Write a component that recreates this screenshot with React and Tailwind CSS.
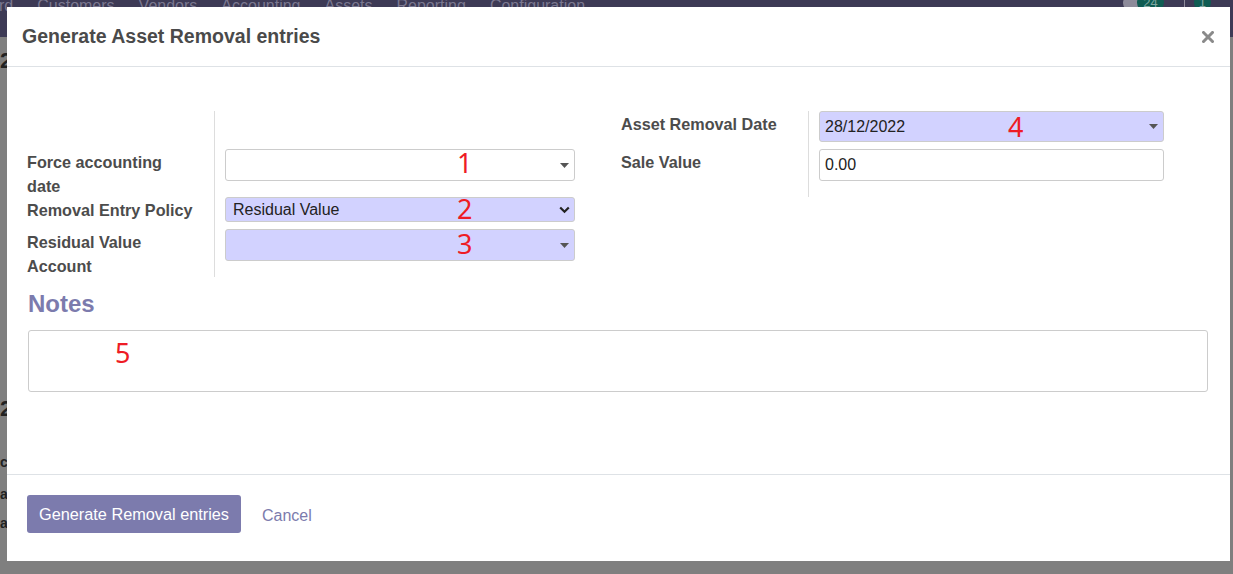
import React from "react";

const Caret = () => (
  <svg width="9" height="5" viewBox="0 0 9 5" className="shrink-0">
    <path d="M0 0 L9 0 L4.5 5 Z" fill="#555" />
  </svg>
);

const Chevron = () => (
  <svg width="11" height="8" viewBox="0 0 11 8" className="shrink-0">
    <path d="M1.2 1.5 L5.5 5.8 L9.8 1.5" fill="none" stroke="#222" strokeWidth="2.2" />
  </svg>
);

const Mark = ({ n, className }) => (
  <span
    className={"absolute text-[#ee1c25] text-[27px] leading-none pointer-events-none " + className}
    style={{ fontFamily: "'Noto Sans', sans-serif" }}
  >
    {n}
  </span>
);

export default function App() {
  return (
    <div
      className="relative w-[1233px] h-[574px] overflow-hidden bg-[#7f7f7f]"
      style={{ fontFamily: "'Liberation Sans', Arial, sans-serif" }}
    >
      {/* backdrop */}
      <div className="h-[37px] bg-[#3d3a55] flex items-start justify-between text-[16px] text-[#7b7890]">
        <div className="flex gap-[24px] -mt-[6px] -ml-[1px]">
          <span>rd</span>
          <span>Customers</span>
          <span>Vendors</span>
          <span>Accounting</span>
          <span>Assets</span>
          <span>Reporting</span>
          <span>Configuration</span>
        </div>
        <div className="flex items-start gap-[20px] mr-[22px] -mt-[6px]">
          <div className="flex items-center">
            <span className="w-[16px] h-[16px] rounded-full bg-[#8d8b9a]"></span>
            <span className="h-[17px] px-[6px] rounded-full bg-[#0f5c52] text-[13px] leading-[17px] text-[#7fa6a0] -ml-[2px]">24</span>
          </div>
          <div className="flex items-center">
            <span className="w-[14px] h-[14px] border border-[#8d8b9a] rounded-[2px]"></span>
            <span className="h-[17px] px-[5px] rounded-full bg-[#0f5c52] text-[13px] leading-[17px] text-[#7fa6a0] -ml-[4px]">1</span>
          </div>
        </div>
      </div>
      <div className="absolute left-0 top-[50px] text-[#222] font-bold text-[22px] leading-none">2</div>
      <div className="absolute left-0 top-[398px] text-[#222] font-bold text-[22px] leading-none">2</div>
      <div className="absolute left-0 top-[455px] text-[#222] font-bold text-[14px] leading-none">c</div>
      <div className="absolute left-0 top-[487px] text-[#222] font-bold text-[14px] leading-none">a</div>
      <div className="absolute left-0 top-[516px] text-[#222] font-bold text-[14px] leading-none">al</div>

      {/* modal */}
      <div className="absolute left-[7px] top-[7px] w-[1223px] h-[554px] bg-white flex flex-col">
        {/* header */}
        <div className="h-[60px] shrink-0 flex items-center justify-between pl-[15px] pr-[16px] pt-[1px] border-b border-[#dee2e6]">
          <h4 className="text-[19.5px] font-bold text-[#4a4a4a]">
            Generate Asset Removal entries
          </h4>
          <svg width="12" height="12" viewBox="0 0 12 12">
            <path d="M1.5 1.5 L10.5 10.5 M10.5 1.5 L1.5 10.5" stroke="#8a8a8a" strokeWidth="3" strokeLinecap="square" />
          </svg>
        </div>

        {/* body */}
        <div className="h-[407px] shrink-0 pt-[44px] text-[16.2px] text-[#4c4c4c]">
          <div className="flex gap-[20px] pl-[20px]">
            {/* left group */}
            <div className="w-[574px] flex">
              <div className="w-[188px] border-r border-[#dddddd] font-bold leading-[24px]">
                <div className="h-[38px]"></div>
                <div className="h-[48px] pt-[1px]">Force accounting<br />date</div>
                <div className="h-[32px] pt-[1px]">Removal Entry Policy</div>
                <div className="h-[48px] pt-[1px]">Residual Value<br />Account</div>
              </div>
              <div className="pl-[10px] flex flex-col">
                <div className="h-[38px]"></div>
                <div className="h-[48px]">
                  <div className="relative w-[350px] h-[32px] border border-[#cccccc] rounded-[3px] bg-white flex items-center justify-end pr-[5px]">
                    <Mark n="1" className="left-[231px] top-[-1px]" />
                    <Caret />
                  </div>
                </div>
                <div className="h-[32px]">
                  <div className="relative w-[350px] h-[25px] border border-[#cccccc] rounded-[3px] bg-[#d2d2ff] flex items-center justify-between pl-[7px] pr-[4px] text-[16px] text-[#222]">
                    <span>Residual Value</span>
                    <Mark n="2" className="left-[231px] top-[-3px]" />
                    <Chevron />
                  </div>
                </div>
                <div className="h-[48px]">
                  <div className="relative w-[350px] h-[32px] border border-[#cccccc] rounded-[3px] bg-[#d2d2ff] flex items-center justify-end pr-[5px]">
                    <Mark n="3" className="left-[231px] top-[0px]" />
                    <Caret />
                  </div>
                </div>
              </div>
            </div>

            {/* right group */}
            <div className="w-[574px] flex items-start">
              <div className="w-[188px] border-r border-[#dddddd] font-bold leading-[24px]">
                <div className="h-[38px] pt-[1px]">Asset Removal Date</div>
                <div className="h-[48px] pt-[1px]">Sale Value</div>
              </div>
              <div className="pl-[10px] flex flex-col">
                <div className="h-[38px]">
                  <div className="relative w-[345px] h-[31px] border border-[#cccccc] rounded-[3px] bg-[#d2d2ff] flex items-center justify-between pl-[5px] pr-[5px] text-[16px] text-[#222]">
                    <span>28/12/2022</span>
                    <Mark n="4" className="left-[188px] top-[1px]" />
                    <Caret />
                  </div>
                </div>
                <div className="h-[48px]">
                  <div className="w-[345px] h-[32px] border border-[#cccccc] rounded-[3px] bg-white flex items-center pl-[5px] text-[16px] text-[#222]">
                    0.00
                  </div>
                </div>
              </div>
            </div>
          </div>

          {/* notes */}
          <div className="pl-[21px] pr-[22px]">
            <div className="mt-[13px] text-[24px] font-bold text-[#7c7bad] leading-[28px]">Notes</div>
            <div className="relative mt-[12px] h-[62px] border border-[#cccccc] rounded-[3px]">
              <Mark n="5" className="left-[86px] top-[8px]" />
            </div>
          </div>
        </div>

        {/* footer */}
        <div className="flex-1 border-t border-[#dee2e6] flex items-start pt-[20px] pl-[20px] gap-[21px]">
          <button className="h-[38px] w-[214px] rounded-[3px] bg-[#7c7bad] text-white text-[16.3px]">
            Generate Removal entries
          </button>
          <span className="mt-[9px] text-[16px] text-[#7c7bad]">Cancel</span>
        </div>
      </div>
    </div>
  );
}
